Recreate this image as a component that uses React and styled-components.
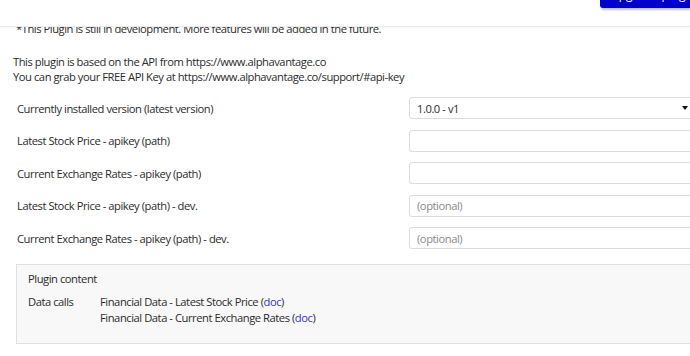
import React from "react";
import styled, { createGlobalStyle } from "styled-components";

const Global = createGlobalStyle`
  html, body { margin: 0; padding: 0; background: #fff; overflow: hidden; }
  body {
    font-family: "Open Sans", "Noto Sans", sans-serif;
    font-size: 11.2px;
    letter-spacing: -0.45px;
    color: #2b2b2b;
  }
`;

const Page = styled.div`
  width: 690px;
  height: 356px;
  overflow: hidden;
  display: flex;
  flex-direction: column;
`;

const Header = styled.div`
  height: 26px;
  flex: none;
  display: flex;
  justify-content: flex-end;
  align-items: flex-start;
  border-bottom: 1px solid #ececec;
  box-shadow: 0 1px 2px rgba(0, 0, 0, 0.04);
  position: relative;
  z-index: 1;
  background: #fff;
`;

const TopButton = styled.div`
  width: 90px;
  height: 8px;
  background: #0000cc;
  border-bottom-left-radius: 3px;
  box-shadow: 1px 2px 2px rgba(0, 0, 60, 0.25);
  color: #fff;
  overflow: hidden;
  display: flex;
  justify-content: center;
  font-size: 12px;
  letter-spacing: 0;
  padding-left: 16px;
  box-sizing: border-box;
`;

const ButtonLabel = styled.span`
  line-height: 14px;
  margin-top: -12.5px;
  white-space: nowrap;
`;

const Scroll = styled.div`
  flex: 1;
  overflow: hidden;
`;

const Content = styled.div`
  margin-top: -6px;
  padding: 0 0 0 13px;
  display: flex;
  flex-direction: column;
`;

const Note = styled.p`
  margin: 0;
  line-height: 15px;
  padding-left: 3px;
`;

const Intro = styled.p`
  margin: 18px 0 0;
  line-height: 15px;
`;

const Form = styled.div`
  display: grid;
  grid-template-columns: 392px 285px;
  row-gap: 10.5px;
  margin-top: 13px;
  padding-left: 4px;
`;

const Label = styled.label`
  display: flex;
  align-items: center;
  height: 22px;
`;

const Field = styled.div`
  height: 22px;
  box-sizing: border-box;
  border: 1px solid #dcdcdc;
  border-radius: 3px;
  background: #fff;
  display: flex;
  align-items: center;
  padding: 0 5px 0 7px;
  color: ${(p) => (p.$placeholder ? "#8a8a8a" : "#2b2b2b")};
`;

const Caret = styled.span`
  margin-left: auto;
  width: 0;
  height: 0;
  border-left: 3.5px solid transparent;
  border-right: 3.5px solid transparent;
  border-top: 4px solid #111;
`;

const Panel = styled.div`
  margin: 15px 0 0 3px;
  width: 700px;
  box-sizing: border-box;
  height: 80px;
  background: #f8f8f8;
  border: 1px solid #e0e0e0;
  padding: 6px 11px;
  line-height: 16.5px;
`;

const PanelTitle = styled.div`
  margin-bottom: 6px;
`;

const CallsRow = styled.div`
  display: grid;
  grid-template-columns: 72px 1fr;
`;

const Doc = styled.a`
  color: #3333cc;
  text-decoration: none;
`;

const fields = [
  { label: "Currently installed version (latest version)", value: "1.0.0 - v1", select: true },
  { label: "Latest Stock Price - apikey (path)", value: "" },
  { label: "Current Exchange Rates - apikey (path)", value: "" },
  { label: "Latest Stock Price - apikey (path) - dev.", placeholder: "(optional)" },
  { label: "Current Exchange Rates - apikey (path) - dev.", placeholder: "(optional)" },
];

export default function App() {
  return (
    <>
      <Global />
      <Page>
        <Header>
          <TopButton>
            <ButtonLabel>Upgrade plugin</ButtonLabel>
          </TopButton>
        </Header>
        <Scroll>
          <Content>
            <Note>*This Plugin is still in development. More features will be added in the future.</Note>
            <Intro>
              This plugin is based on the API from https://www.alphavantage.co
              <br />
              You can grab your FREE API Key at https://www.alphavantage.co/support/#api-key
            </Intro>
            <Form>
              {fields.map((f) => (
                <React.Fragment key={f.label}>
                  <Label>{f.label}</Label>
                  <Field $placeholder={!!f.placeholder}>
                    {f.value || f.placeholder || ""}
                    {f.select && <Caret />}
                  </Field>
                </React.Fragment>
              ))}
            </Form>
            <Panel>
              <PanelTitle>Plugin content</PanelTitle>
              <CallsRow>
                <span>Data calls</span>
                <div>
                  Financial Data - Latest Stock Price (<Doc>doc</Doc>)
                  <br />
                  Financial Data - Current Exchange Rates (<Doc>doc</Doc>)
                </div>
              </CallsRow>
            </Panel>
          </Content>
        </Scroll>
      </Page>
    </>
  );
}
